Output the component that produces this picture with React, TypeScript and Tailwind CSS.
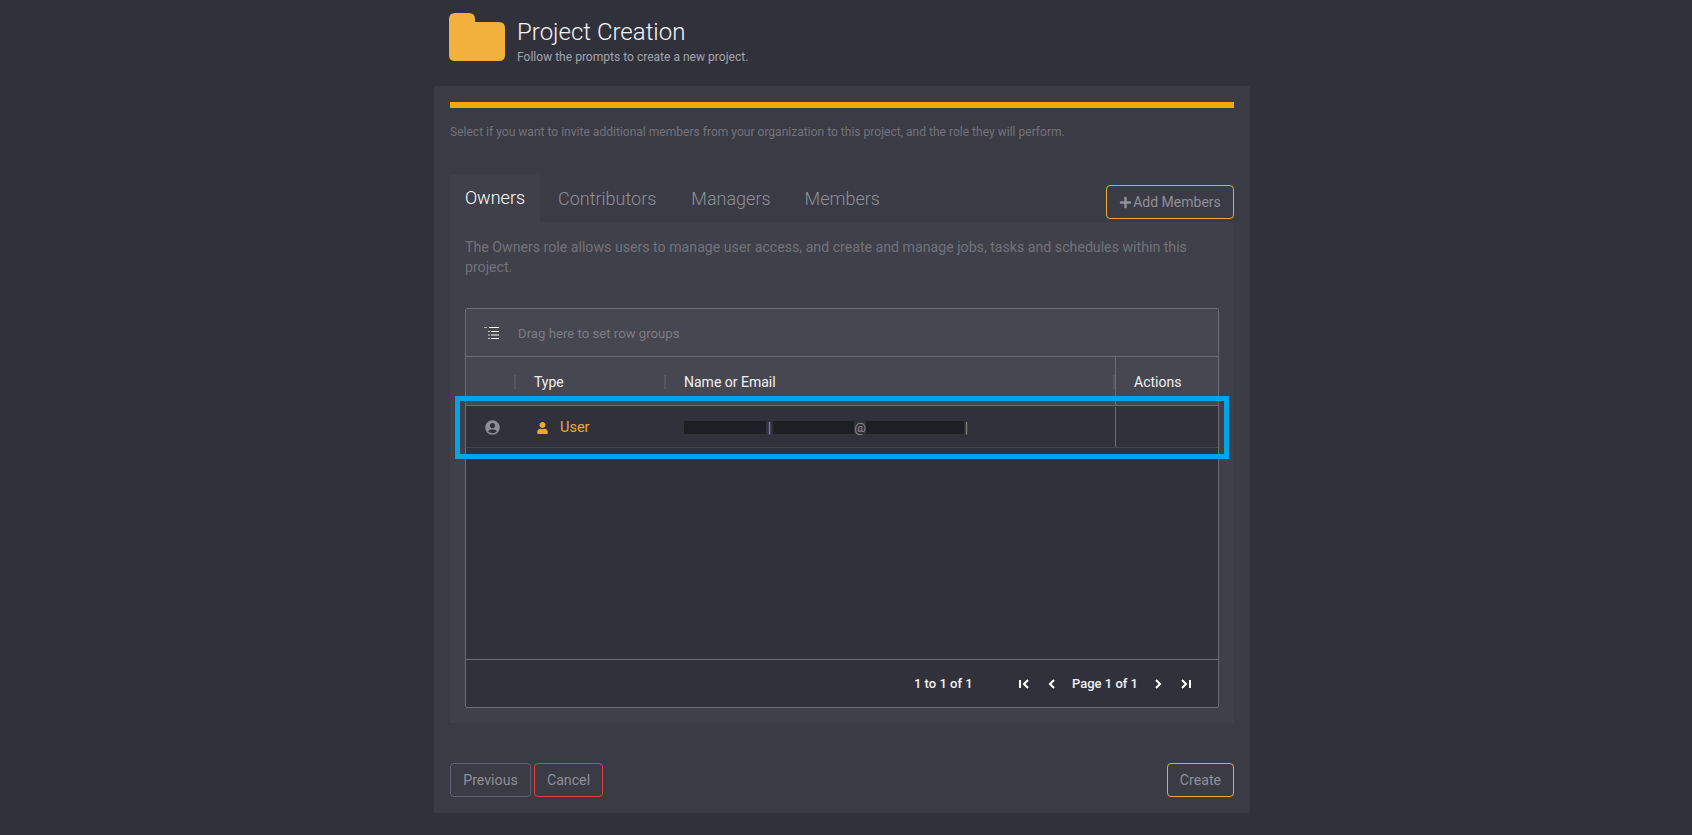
import { FaPlus, FaUser, FaUserCircle } from "react-icons/fa";

const tabs = [
  { label: "Contributors", className: "ml-[18px]" },
  { label: "Managers", className: "ml-[35px]" },
  { label: "Members", className: "ml-[34px]" },
];

const GroupIcon = () => (
  <svg width="15" height="12" viewBox="0 0 15 12" fill="none" stroke="#ffffff" strokeWidth="1">
    <path d="M0 .5h3" opacity="0.6" />
    <path d="M5 .5h10M7 4.5h8M7 8h8M7 11.5h8" />
    <path d="M4 4.5h2M4 8h2M4 11.5h2" opacity="0.7" />
  </svg>
);

const PageIcon = ({ d }: { d: string }) => (
  <svg width="12" height="12" viewBox="0 0 12 12" fill="none" stroke="#ffffff" strokeWidth="2">
    <path d={d} />
  </svg>
);

const ResizeHandle = () => (
  <span className="absolute left-[-1px] top-[18px] h-[14px] w-[2px] bg-[#55555e]" />
);

const App = () => {
  return (
    <div className="min-h-screen h-[835px] overflow-hidden bg-[#31313b] pl-[434px] font-['Roboto',sans-serif]">
      <div className="w-[816px]">
        <div className="flex h-[86px] items-start pl-[15px] pt-[13px]">
          <svg width="56" height="48" viewBox="0 0 56 48" className="shrink-0">
            <path
              d="M6 0h14q6 0 6 6v3h24q6 0 6 6v27q0 6-6 6H6q-6 0-6-6V6q0-6 6-6z"
              fill="#f2b13d"
            />
          </svg>
          <div className="ml-3 pt-[3px]">
            <h1 className="text-[24px] font-light leading-[32px] text-[#f5f5f7]">Project Creation</h1>
            <p className="pt-[1px] text-[12.05px] leading-[17px] text-[#a3a4ab]">Follow the prompts to create a new project.</p>
          </div>
        </div>

        <div className="h-[727px] rounded-[2px] bg-[#3b3b45] pl-[16px] pt-4">
          <div className="h-[6px] w-[784px] bg-[#ecab06]" />
          <p className="mt-[15px] text-[12.06px] leading-[18px] text-[#72737b]">
            Select if you want to invite additional members from your organization to this project, and the role they will perform.
          </p>

          <div className="mt-[34px] flex h-[47px] w-[784px] items-start">
            <div className="flex h-[47px] w-[90px] items-center justify-center rounded-t-[2px] bg-[#40404a] pb-[3px] text-[18px] font-light text-white">
              Owners
            </div>
            {tabs.map((tab) => (
              <div key={tab.label} className={`flex h-[47px] items-center text-[18px] font-light text-[#8f9098] ${tab.className}`}>
                {tab.label}
              </div>
            ))}
            <button className="ml-auto mt-[10px] flex h-[34px] w-[128px] items-center justify-center gap-[1px] rounded-[4px] border border-[#f0a92f] text-[14px] text-[#8f9098]">
              <FaPlus className="h-[13px] w-[13px]" />
              Add Members
            </button>
          </div>

          <div className="h-[501px] w-[784px] bg-[#40404a] px-[15px] pt-[15px]">
            <p className="h-[71px] text-[14.17px] leading-[20px] text-[#72737b]">
              The Owners role allows users to manage user access, and create and manage jobs, tasks and schedules within this project.
            </p>

            <div className="relative flex h-[400px] w-[754px] flex-col rounded-[2px] border border-[#6c6c74] bg-[#31313b]">
              <div className="flex h-[48px] shrink-0 items-center border-b border-[#6c6c74] bg-[#474751] pl-[18px]">
                <GroupIcon />
                <span className="ml-[19px] pt-[2px] text-[13.18px] text-[#7b7c84]">Drag here to set row groups</span>
              </div>

              <div className="flex h-[49px] shrink-0 border-b border-[#6c6c74] bg-[#474751] text-[14px] text-[#f1f1f3]">
                <div className="w-[49px]" />
                <div className="relative flex w-[150px] items-center pl-[19px] pt-[2px]">
                  <ResizeHandle />
                  Type
                </div>
                <div className="relative flex w-[450px] items-center pl-[19px] pt-[2px]">
                  <ResizeHandle />
                  Name or Email
                </div>
                <div className="relative flex flex-1 items-center border-l border-[#6c6c74] pl-[18px] pt-[2px]">
                  <span className="absolute left-[-3px] top-[18px] h-[14px] w-[2px] bg-[#55555e]" />
                  Actions
                </div>
              </div>

              <div className="flex h-[42px] shrink-0 items-center border-b border-[#45454e] pt-[2px]">
                <div className="flex w-[50px] justify-center pl-[2px]">
                  <FaUserCircle className="h-[15px] w-[15px] text-[#8d8e95]" />
                </div>
                <div className="flex w-[150px] items-center gap-[12px] pl-[21px] text-[14.5px] text-[#e9a935]">
                  <FaUser className="h-[12px] w-[11px]" />
                  User
                </div>
                <div className="flex w-[449px] items-center pl-[18px] text-[14px] leading-none text-[#8d8e95]">
                  <span className="h-[13px] w-[82px] bg-[#1e1f24]" />
                  <span className="w-[7px] text-center">|</span>
                  <span className="h-[13px] w-[81px] bg-[#1e1f24]" />
                  <span className="w-[12px] text-center text-[13px]">@</span>
                  <span className="h-[13px] w-[98px] bg-[#1e1f24]" />
                  <span className="w-[5px] text-center">|</span>
                </div>
                <div className="-mt-[2px] h-[40px] flex-1 border-l border-[#6c6c74]" />
              </div>

              <div className="flex-1" />

              <div className="flex h-[48px] shrink-0 items-center border-t border-[#6c6c74] pl-[448px] text-[13px] font-medium text-[#f1f1f3]">
                <span className="w-[104px]">1 to 1 of 1</span>
                <PageIcon d="M2 2v8M10 2L6 6l4 4" />
                <span className="ml-[16px]" />
                <PageIcon d="M8 2L4 6l4 4" />
                <span className="ml-[14px] w-[67px] whitespace-nowrap">Page 1 of 1</span>
                <span className="ml-[13px]" />
                <PageIcon d="M4 2l4 4-4 4" />
                <span className="ml-[16px]" />
                <PageIcon d="M2 2l4 4-4 4M10 2v8" />
              </div>

              {/* highlight frame drawn over the row */}
              <div className="absolute left-[-11px] top-[87px] h-[63px] w-[774px] border-[5px] border-[#00a5e8]" />
            </div>
          </div>

          <div className="mt-10 flex w-[784px] items-start justify-between text-[14.2px] text-[#8f9098]">
            <div className="flex gap-[3px]">
              <button className="h-[34px] w-[81px] rounded-[4px] border border-[#62627a] pt-[1px]">Previous</button>
              <button className="h-[34px] w-[69px] rounded-[4px] border border-[#d9423f] pt-[1px]">Cancel</button>
            </div>
            <button className="h-[34px] w-[67px] rounded-[4px] border border-[#f0a92f] pt-[1px]">Create</button>
          </div>
        </div>
      </div>
    </div>
  );
};

export default App;
